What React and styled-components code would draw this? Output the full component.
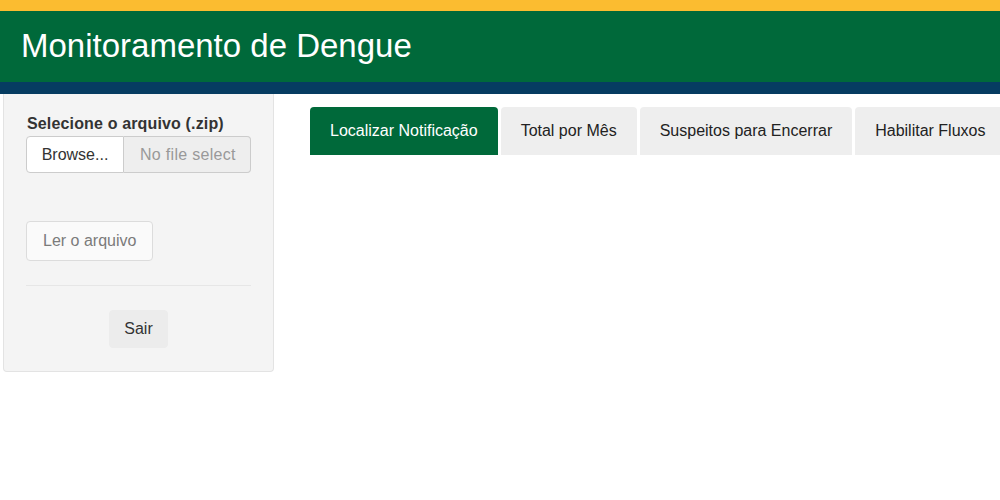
import React from "react";
import styled, { createGlobalStyle } from "styled-components";

const Global = createGlobalStyle`
  html, body { margin: 0; padding: 0; background: #fff; }
  body { font-family: "Liberation Sans", Arial, sans-serif; color: #333; overflow: hidden; }
  * { box-sizing: border-box; }
`;

const Header = styled.header`
  border-top: 11px solid #fbbc30;
  border-bottom: 12px solid #063c61;
  background: #00693a;
  height: 94px;
  display: flex;
  align-items: center;
  padding-left: 21px;
`;

const Title = styled.h1`
  margin: 0;
  font-weight: 400;
  font-size: 33px;
  color: #fff;
  line-height: 1;
  padding-bottom: 2px;
`;

const Body = styled.div`
  display: flex;
  align-items: flex-start;
`;

const Sidebar = styled.aside`
  margin-left: 3px;
  width: 271px;
  flex: none;
  background: #f4f4f4;
  border: 1px solid #e3e3e3;
  border-top: none;
  border-radius: 0 0 4px 4px;
  padding: 20px 22px 23px;
  display: flex;
  flex-direction: column;
`;

const Label = styled.label`
  font-weight: 700;
  font-size: 16px;
  line-height: 20px;
  color: #333;
  margin: 0 0 2px 1px;
  letter-spacing: 0.15px;
`;

const InputGroup = styled.div`
  display: flex;
  height: 37px;
  width: 225px;
`;

const BrowseBtn = styled.span`
  width: 98px;
  flex: none;
  display: flex;
  align-items: center;
  justify-content: center;
  background: #fff;
  border: 1px solid #ccc;
  border-radius: 4px 0 0 4px;
  font-size: 16px;
  color: #333;
`;

const FileField = styled.span`
  flex: 1;
  min-width: 0;
  display: flex;
  align-items: center;
  padding: 0 14px 0 16px;
  background: #eee;
  border: 1px solid #ccc;
  border-left: none;
  border-radius: 0 4px 4px 0;
`;

const FileText = styled.span`
  min-width: 0;
  font-size: 16px;
  color: #999;
  overflow: hidden;
  white-space: nowrap;
  letter-spacing: 0.3px;
`;

const Button = styled.button`
  align-self: ${(p) => (p.$center ? "center" : "flex-start")};
  font-family: inherit;
  font-size: 16px;
  height: ${(p) => p.$h}px;
  padding: 0 ${(p) => p.$px}px;
  border-radius: 4px;
  border: 1px solid ${(p) => (p.$muted ? "#dcdcdc" : "#ececec")};
  background: ${(p) => (p.$muted ? "#fafafa" : "#ececec")};
  color: ${(p) => (p.$muted ? "#7b7b7b" : "#333")};
  margin-top: ${(p) => p.$mt}px;
`;

const Rule = styled.hr`
  border: none;
  border-top: 1px solid #e6e6e6;
  margin: 24px 0 0;
  width: 225px;
`;

const Main = styled.main`
  flex: 1;
  min-width: 0;
  padding: 13px 0 0 36px;
  overflow: hidden;
`;

const Tabs = styled.nav`
  display: flex;
  gap: 3px;
  white-space: nowrap;
`;

const Tab = styled.div`
  flex: none;
  height: 48px;
  padding: 0 20px;
  display: flex;
  align-items: center;
  font-size: 16px;
  border-radius: 4px 4px 0 0;
  background: ${(p) => (p.$active ? "#00693a" : "#eeeeee")};
  color: ${(p) => (p.$active ? "#fff" : "#222")};
`;

const tabs = ["Localizar Notificação", "Total por Mês", "Suspeitos para Encerrar", "Habilitar Fluxos"];

export default function App() {
  return (
    <>
      <Global />
      <Header>
        <Title>Monitoramento de Dengue</Title>
      </Header>
      <Body>
        <Sidebar>
          <Label>Selecione o arquivo (.zip)</Label>
          <InputGroup>
            <BrowseBtn>Browse...</BrowseBtn>
            <FileField>
              <FileText>No file selected</FileText>
            </FileField>
          </InputGroup>
          <Button $muted $h={40} $px={16} $mt={48}>Ler o arquivo</Button>
          <Rule />
          <Button $center $h={38} $px={14} $mt={24}>Sair</Button>
        </Sidebar>
        <Main>
          <Tabs>
            {tabs.map((t, i) => (
              <Tab key={t} $active={i === 0}>{t}</Tab>
            ))}
          </Tabs>
        </Main>
      </Body>
    </>
  );
}
